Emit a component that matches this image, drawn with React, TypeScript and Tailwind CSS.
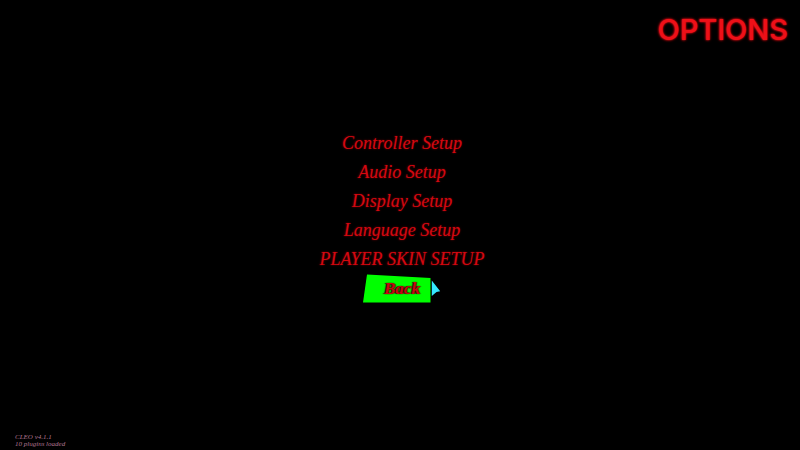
const menuItems = [
  "Controller Setup",
  "Audio Setup",
  "Display Setup",
  "Language Setup",
  "PLAYER SKIN SETUP",
];

function MenuItem({ label }: { label: string }) {
  return (
    <li>
      <button type="button" className="block h-[29px] cursor-pointer text-[18px] leading-[29px] text-[#d40810] [text-shadow:0_0_2px_#8a0008]">
        {label}
      </button>
    </li>
  );
}

function Pointer() {
  return (
    <svg className="absolute left-16 top-1.5 h-4 w-3" viewBox="0 0 12 16" aria-hidden="true">
      <path d="M0.8 0.5 L9.2 11.2 L5.5 12 L0.8 16 Z" fill="#35e8ff" />
    </svg>
  );
}

function BackButton() {
  return (
    <li className="relative">
      <svg className="absolute -left-1 top-0 h-[29px] w-[69px]" viewBox="0 0 69 29" aria-hidden="true">
        <path d="M4 0.5 L67.5 4 L67.5 28.5 L0 28.5 Z" fill="#00ff00" />
      </svg>
      <button
        type="button"
        className="relative block h-[29px] w-[70px] cursor-pointer text-[17px] font-bold leading-[29px] text-[#c80810] [text-shadow:1px_0_1px_#300,-1px_0_1px_#300]"
      >
        Back
      </button>
      <Pointer />
    </li>
  );
}

export default function App() {
  return (
    <div className="flex min-h-screen flex-col bg-black">
      <header className="flex justify-end px-3 pt-3">
        <h1 className="font-['Inter',sans-serif] text-[29px] font-medium leading-9 text-[#ee1018] [text-shadow:0_0_2px_#ee1018,0_0_3px_#c00008]">
          OPTIONS
        </h1>
      </header>

      <nav className="flex flex-1 items-center justify-center pb-[50px] pl-1" aria-label="Options">
        <ul className="flex flex-col items-center font-['Liberation_Serif',serif] italic">
          {menuItems.map((label) => (
            <MenuItem key={label} label={label} />
          ))}
          <BackButton />
        </ul>
      </nav>

      <footer className="px-[15px] pb-[2px] font-['Liberation_Serif',serif] text-[7px] italic leading-[7px] text-[#b07590]">
        <p>CLEO v4.1.1</p>
        <p>10 plugins loaded</p>
      </footer>
    </div>
  );
}
